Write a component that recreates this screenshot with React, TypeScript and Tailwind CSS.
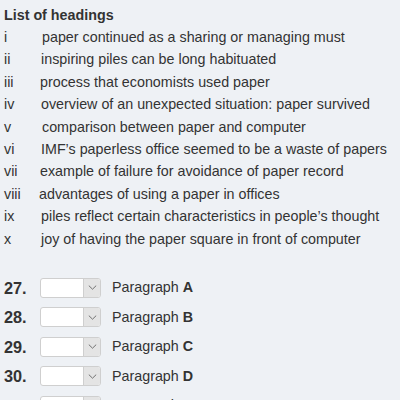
const headings: [string, string, number][] = [
  ["i", "paper continued as a sharing or managing must", 42],
  ["ii", "inspiring piles can be long habituated", 41],
  ["iii", "process that economists used paper", 40],
  ["iv", "overview of an unexpected situation: paper survived", 41],
  ["v", "comparison between paper and computer", 42],
  ["vi", "IMF\u2019s paperless office seemed to be a waste of papers", 41],
  ["vii", "example of failure for avoidance of paper record", 40],
  ["viii", "advantages of using a paper in offices", 39],
  ["ix", "piles reflect certain characteristics in people\u2019s thought", 41],
  ["x", "joy of having the paper square in front of computer", 41],
];

const questions = [
  ["27.", "A"],
  ["28.", "B"],
  ["29.", "C"],
  ["30.", "D"],
  ["31.", "E"],
];

function FakeSelect() {
  return (
    <div className="flex h-[20px] w-[61px] overflow-hidden rounded-[3px] border border-[#cfcfcf] bg-white">
      <div className="flex-1" />
      <div className="flex w-[17px] items-center justify-center border-l border-[#cfcfcf] bg-[#e4e4e4]">
        <svg width="9" height="5" viewBox="0 0 9 5" fill="none">
          <path d="M0.8 0.6 L4.5 4.2 L8.2 0.6" stroke="#707070" strokeWidth="1" />
        </svg>
      </div>
    </div>
  );
}

export default function App() {
  return (
    <div
      className="h-[400px] w-[400px] overflow-hidden bg-[#eef1f5] px-[4px] pt-[4px] text-[#333]"
      style={{ fontFamily: '"Liberation Sans", Arial, sans-serif' }}
    >
      <div className="text-[14.3px] font-bold leading-[22px]">List of headings</div>
      <div className="text-[14.3px] leading-[22.4px]">
        {headings.map(([num, text, x]) => (
          <div key={num} className="flex whitespace-nowrap">
            <span style={{ width: x - 4 }} className="shrink-0">
              {num}
            </span>
            <span>{text}</span>
          </div>
        ))}
      </div>
      <div className="mt-[23px] flex flex-col">
        {questions.map(([n, letter]) => (
          <div key={n} className="flex h-[29.5px] items-center">
            <span className="w-[36px] shrink-0 text-[16.3px] font-bold">{n}</span>
            <FakeSelect />
            <span className="ml-[11px] text-[14.3px]">
              Paragraph <b>{letter}</b>
            </span>
          </div>
        ))}
      </div>
    </div>
  );
}
